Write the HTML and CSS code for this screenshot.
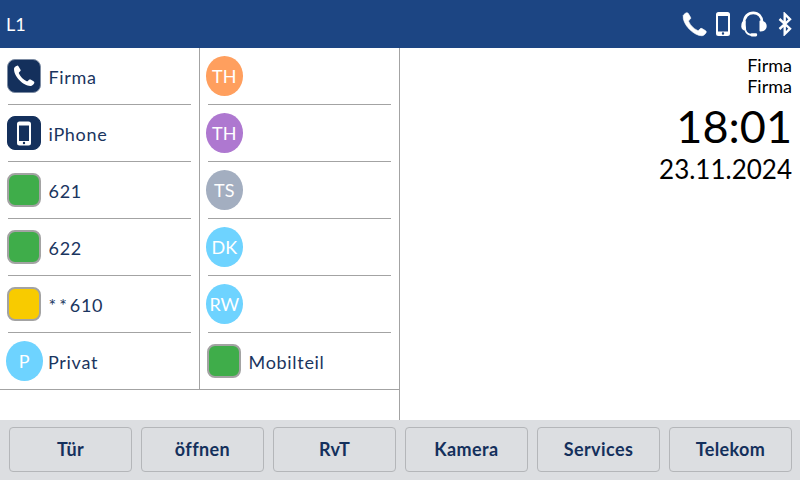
FILE: index.html
```html
<!DOCTYPE html>
<html lang="de">
<head>
<meta charset="utf-8">
<title>L1</title>
<link rel="stylesheet" href="styles.css">
</head>
<body>
<div class="screen">
  <header class="topbar">
    <span class="line">L1</span>
    <div class="status">
      <svg class="st-phone" viewBox="0 0 24 24"><path d="M1.200 3.400C2 2 3.400.9 4.600.7c.7-.1 1.100.2 1.500.8l2.100 3.600c.3.6.3 1.100-.1 1.500L6.700 8c-.4.4-.4.800-.2 1.300 1.500 3.400 4.700 6.800 8.400 8.400.5.2.9.100 1.300-.3l1.300-1.300c.5-.5 1.100-.5 1.700-.2l3.200 1.900c.9.500 1.100 1.200.7 2-.7 1.400-2.300 2.900-3.900 3-7.200.4-19.200-10.700-18-19.600z" stroke="#fff" stroke-width=".6"/></svg>
      <svg class="st-mobile" viewBox="0 0 14 24"><path fill-rule="evenodd" d="M2.500 0h9A2.500 2.500 0 0 1 14 2.500v19a2.500 2.500 0 0 1-2.500 2.500h-9A2.500 2.500 0 0 1 0 21.500v-19A2.500 2.500 0 0 1 2.500 0zM2 4v15.500h10V4zm5 16.300a1.200 1.200 0 1 0 0 2.400 1.200 1.200 0 0 0 0-2.400z"/></svg>
      <svg class="st-headset" viewBox="0 0 26 26"><path d="M3 12.500C3 5.500 7.200 1.800 12.300 1.800s8.700 3.700 8.700 9.200" fill="none" stroke="#fff" stroke-width="2.700"/><path d="M1.800 10.500 4.500 10 5.200 20C2 19.500.3 18 .3 15.500s.3-4 1.500-5z"/><path d="M19.500 9.500c3.700 0 6.200 2.300 6.200 5.500s-2.300 5.500-6.200 5.500c-.6 0-1-.4-1-1V10.500c0-.6.400-1 1-1z"/><path d="M4.500 19.500c1 2.700 2.800 4 5.500 4.300" fill="none" stroke="#fff" stroke-width="1.800"/><rect x="9.300" y="22.300" width="6.900" height="3.200" rx="1.400"/></svg>
      <svg class="st-bt" viewBox="0 0 14 24"><path d="M1.500 7 12 16.700 6.700 22V2L12 7.300 1.500 17" fill="none" stroke="#fff" stroke-width="2.400"/></svg>
    </div>
  </header>

  <main class="middle">
    <section class="keys">
      <div class="col col-a">
        <div class="row"><span class="tile tile-dark"><svg class="ic-phone" viewBox="0 0 24 24"><path d="M1.200 3.400C2 2 3.400.9 4.600.7c.7-.1 1.100.2 1.500.8l2.100 3.600c.3.6.3 1.100-.1 1.500L6.700 8c-.4.4-.4.800-.2 1.300 1.500 3.400 4.700 6.800 8.400 8.400.5.2.9.100 1.300-.3l1.300-1.300c.5-.5 1.100-.5 1.700-.2l3.200 1.900c.9.500 1.100 1.200.7 2-.7 1.400-2.300 2.900-3.900 3-7.200.4-19.200-10.700-18-19.600z"/></svg></span><span class="label">Firma</span></div>
        <div class="row"><span class="tile tile-dark tile-plain"><svg class="ic-mobile" viewBox="0 0 14 24"><path fill-rule="evenodd" d="M2.500 0h9A2.500 2.500 0 0 1 14 2.500v19a2.500 2.500 0 0 1-2.500 2.500h-9A2.500 2.500 0 0 1 0 21.500v-19A2.500 2.500 0 0 1 2.500 0zM2 4v15.500h10V4zm5 16.300a1.200 1.200 0 1 0 0 2.400 1.200 1.200 0 0 0 0-2.400z"/></svg></span><span class="label">iPhone</span></div>
        <div class="row"><span class="tile tile-green"></span><span class="label">621</span></div>
        <div class="row"><span class="tile tile-green"></span><span class="label">622</span></div>
        <div class="row"><span class="tile tile-yellow"></span><span class="label"><span class="stars">**</span>610</span></div>
        <div class="row"><span class="avatar av-blue">P</span><span class="label label-av">Privat</span></div>
      </div>
      <div class="col">
        <div class="row"><span class="avatar av-orange">TH</span></div>
        <div class="row"><span class="avatar av-purple">TH</span></div>
        <div class="row"><span class="avatar av-grey">TS</span></div>
        <div class="row"><span class="avatar av-blue">DK</span></div>
        <div class="row"><span class="avatar av-blue">RW</span></div>
        <div class="row"><span class="tile tile-green"></span><span class="label">Mobilteil</span></div>
      </div>
    </section>
    <section class="info">
      <div class="name">Firma</div>
      <div class="name">Firma</div>
      <div class="time">18:01</div>
      <div class="date">23.11.2024</div>
    </section>
  </main>

  <footer class="softkeys">
    <button class="key">Tür</button>
    <button class="key">öffnen</button>
    <button class="key">RvT</button>
    <button class="key">Kamera</button>
    <button class="key">Services</button>
    <button class="key">Telekom</button>
  </footer>
</div>
</body>
</html>
```
FILE: styles.css
```css
* { box-sizing: border-box; }
html, body { margin: 0; padding: 0; }
body { width: 800px; height: 480px; overflow: hidden; background: #fff; font-family: Lato, "Liberation Sans", sans-serif; }
.screen { width: 800px; height: 480px; display: flex; flex-direction: column; }

.topbar { height: 48px; flex: none; background: #1c4583; color: #fff; display: flex; align-items: center; justify-content: space-between; padding: 0 8px 0 6px; }
.line { font-size: 18px; }
.status { display: flex; align-items: center; }
.status svg { display: block; fill: #fff; }
.st-phone { width: 25px; height: 25px; margin-right: 9px; }
.st-mobile { width: 14px; height: 24px; margin-right: 11px; }
.st-headset { width: 26px; height: 26px; margin-right: 11px; }
.st-bt { width: 14px; height: 24px; }

.middle { height: 372px; flex: none; display: flex; }
.keys { width: 400px; height: 372px; border-right: 1px solid #a3a3a3; display: flex; align-items: flex-start; }
.col { width: 199px; flex: none; border-bottom: 1px solid #a3a3a3; }
.col-a { width: 200px; border-right: 1px solid #a3a3a3; }
.col:last-child { width: 200px; }
.row { height: 57px; display: flex; align-items: center; margin-left: 8px; width: 183px; border-bottom: 1px solid #a3a3a3; }
.row:last-child { border-bottom: 0; height: 56px; }

.tile { width: 34px; height: 34px; flex: none; margin-left: -1px; border-radius: 8px; border: 2px solid #a3a3a3; display: flex; align-items: center; justify-content: center; }
.tile-dark { background: #14305c; border-color: #7d8ca3; border-width: 1px; }
.tile-plain { border-color: #14305c; }
.tile-green { background: #3fad4a; }
.tile-yellow { background: #f8cb00; }
.ic-phone { width: 22px; height: 22px; fill: #fff; }
.ic-mobile { width: 14px; height: 25px; fill: #fff; }

.label { margin-left: 7.500px; padding-top: 2px; font-size: 18px; letter-spacing: .7px; color: #1a3560; white-space: nowrap; }
.label-av { margin-left: 5px; }
.stars { letter-spacing: 3px; }

.avatar { width: 37.500px; height: 40px; flex: none; margin-left: -2.500px; border-radius: 50%; color: #fff; font-size: 18px; display: flex; align-items: center; justify-content: center; }
.av-orange { background: #ff9f5e; }
.av-purple { background: #ae78d0; }
.av-grey { background: #a3aec0; }
.av-blue { background: #6ed3ff; }

.info { flex: 1; padding: 7px 8px 0 0; text-align: right; color: #000; }
.name { font-size: 18px; line-height: 21px; }
.time { font-size: 45px; line-height: 52px; margin-top: 3px; }
.date { font-size: 26px; line-height: 32px; margin-top: 1px; }

.softkeys { height: 60px; flex: none; background: #dcdee1; display: flex; gap: 9px; padding: 7px 8px 8px 9px; }
.key { width: 123px; height: 45px; flex: none; padding: 0 0 2px; background: #dcdee1; border: 1px solid #b4b6b9; border-radius: 4px; color: #14305c; font-family: Lato, "Liberation Sans", sans-serif; font-size: 18px; font-weight: 700; letter-spacing: .4px; }
```
